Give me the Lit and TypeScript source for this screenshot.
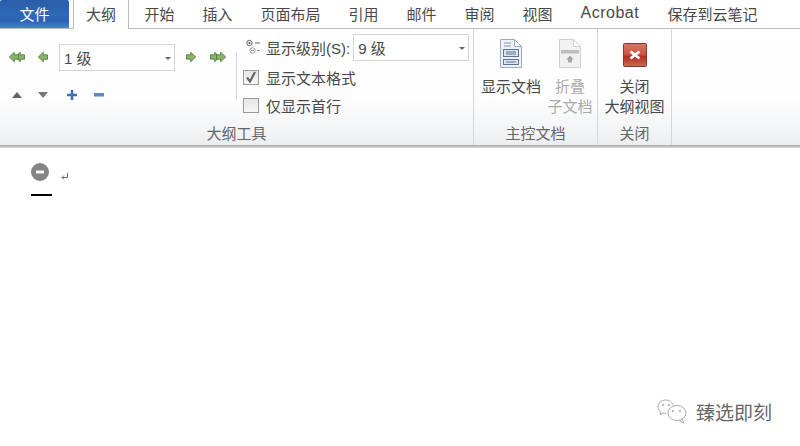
import { LitElement, html, css, svg } from "lit";
import { customElement } from "lit/decorators.js";

const arrow = (dir: 1 | -1) => svg`<g transform="${dir === 1 ? "" : "translate(10 0) scale(-1 1)"}"><path d="M.5 2.800h4.200V.2L9.700 5 4.700 9.800V7.200H.5z" fill="#8ab566" stroke="#557f44" stroke-width=".9"/></g>`;
const single = (dir: 1 | -1) => html`<svg class="arrow" width="12" height="12" viewBox="-1 -1 12 12">${arrow(dir)}</svg>`;
const double = (dir: 1 | -1) => html`<svg class="arrow" width="18" height="12" viewBox="-1 -1 18 12"><g transform="translate(${dir === 1 ? 0 : 6} 0)">${arrow(dir)}</g><g transform="translate(${dir === 1 ? 6 : 0} 0)">${arrow(dir)}</g></svg>`;

@customElement("app-root")
export class AppRoot extends LitElement {
  static styles = css`
    :host {
      display: block; width: 800px; height: 446px; background: #fff; overflow: hidden;
      font-family: "Liberation Sans", "Noto Sans CJK SC", sans-serif; color: #484848; position: relative;
    }
    .tabbar { display: flex; height: 29px; border-bottom: 1px solid #b8babc; box-sizing: border-box; background: #fff; font-size: 15px; }
    .file {
      width: 69px; height: 28px; color: #fff; display: flex; align-items: center; justify-content: center; padding-bottom: 2px; box-sizing: border-box;
      background: linear-gradient(#2a5ea8 0%, #2f69b6 55%, #2b63b1 75%, #4584cc 100%); border-radius: 2px 2px 0 0;
    }
    .active {
      margin-left: 4px; width: 56px; height: 29px; box-sizing: border-box; border: 1px solid #b8babc; border-top: 0; border-bottom: 0; padding-bottom: 2px;
      background: #fff; display: flex; align-items: center; justify-content: center;
    }
    .tabs { display: flex; }
    .tab { display: flex; align-items: center; padding: 0 0 2px 15.5px; white-space: nowrap; box-sizing: border-box; }
    .t2 { width: 58px; }
    .t3 { width: 88px; }
    .t8 { width: 87px; font-size: 16px; letter-spacing: .5px; }
    .ribbon {
      height: 116px; display: flex; box-sizing: border-box;
      background: linear-gradient(#fff 0%, #fdfdfe 60%, #f4f5f6 85%, #ecedee 100%);
    }
    .group { display: flex; flex-direction: column; border-right: 1px solid #d4d6d9; box-sizing: border-box; }
    .g1 { width: 474px; }
    .g2 { width: 124px; }
    .g3 { width: 74px; }
    .body { flex: 1; display: flex; min-height: 0; }
    .label { height: 24px; flex: none; font-size: 15px; color: #666; display: flex; align-items: center; justify-content: center; padding-bottom: 2px; box-sizing: border-box; }
    .tools { width: 236px; padding: 14px 0 0 8px; box-sizing: border-box; display: flex; flex-direction: column; gap: 15px; }
    .row1, .row2 { display: flex; align-items: center; }
    .arrow { display: block; }
    .row1 { height: 28px; }
    .combo {
      border: 1px solid #d2d4d6; background: #fff; box-sizing: border-box; height: 27px; display: flex; align-items: center;
      font-size: 15px; color: #484848; position: relative; padding-left: 4px;
    }
    .combo::after {
      content: ""; position: absolute; right: 3px; top: 12px; border: 3px solid transparent; border-top: 3px solid #666; border-bottom: 0;
    }
    .c1 { width: 116px; margin: 0 10px; }
    .c2 { width: 116px; }
    .gap1 { width: 11px; }
    .gap2 { width: 12px; }
    .divider { width: 1px; height: 48px; background: #d9dadc; margin-top: 23px; }
    .row2 { height: 18px; }
    .tri { width: 0; height: 0; border-left: 5px solid transparent; border-right: 5px solid transparent; }
    .up { border-bottom: 6px solid #666; margin: 0 16px 0 4px; }
    .down { border-top: 6px solid #777; margin-right: 19px; }
    .plus { margin-right: 17px; }
    .opts { padding: 4px 0 0 6px; display: flex; flex-direction: column; font-size: 15px; }
    .level { display: flex; align-items: center; height: 28px; gap: 3px; white-space: nowrap; margin-bottom: 2px; }
    .lvl { margin: 0 1px 0 3px; }
    .check { display: flex; align-items: center; height: 28px; gap: 7px; }
    .box { width: 16px; height: 15px; border: 1px solid #9a9a9a; background: linear-gradient(#e6e6e6, #f6f6f6); box-sizing: border-box; display: flex; align-items: center; justify-content: center; }
    .big {
      display: flex; flex-direction: column; align-items: center; font-size: 15px; line-height: 20px; padding-top: 10px; box-sizing: border-box; white-space: nowrap;
    }
    .icon { height: 29px; margin-bottom: 9px; display: block; }
    .off { color: #aaa; }
    .b1 { width: 74px; }
    .b2 { width: 44px; }
    .b3 { width: 73px; }
    .sep { height: 3px; background: linear-gradient(#a9abad, #bfc0c2 60%, #e4e5e6); }
    .doc { padding: 15px 0 0 31px; }
    .line { display: flex; align-items: flex-end; gap: 12px; }
    .caret { width: 21px; height: 2px; background: #000; margin-top: 13px; }
    .wm {
      position: absolute; left: 657px; top: 398px; display: flex; align-items: center; gap: 9px;
      font-size: 19px; color: #666;
    }
  `;

  render() {
    return html`
      <div class="tabbar">
        <div class="file">文件</div>
        <div class="active">大纲</div>
        <div class="tabs">
          <div class="tab t2">开始</div>
          <div class="tab t2">插入</div>
          <div class="tab t3">页面布局</div>
          <div class="tab t2">引用</div>
          <div class="tab t2">邮件</div>
          <div class="tab t2">审阅</div>
          <div class="tab t2">视图</div>
          <div class="tab t8">Acrobat</div>
          <div class="tab">保存到云笔记</div>
        </div>
      </div>
      <div class="ribbon">
        <div class="group g1">
          <div class="body">
            <div class="tools">
              <div class="row1">
                ${double(-1)}<span class="gap1"></span>${single(-1)}
                <div class="combo c1">1 级</div>
                ${single(1)}<span class="gap2"></span>${double(1)}
              </div>
              <div class="row2">
                <span class="tri up"></span><span class="tri down"></span>
                <svg class="plus" width="10" height="10" viewBox="0 0 10 10"><path d="M3.700 0h2.600v3.700H10v2.600H6.300V10H3.700V6.300H0V3.700h3.700z" fill="#3f6fb5"/></svg>
                <svg width="10" height="4" viewBox="0 0 10 4"><rect width="10" height="3.500" fill="#5f86c0"/></svg>
              </div>
            </div>
            <div class="divider"></div>
            <div class="opts">
              <div class="level">
                <svg class="lvl" width="16" height="16" viewBox="0 0 16 16" fill="none" stroke="#666">
                  <circle cx="3.500" cy="4" r="2.700"/><circle cx="3.500" cy="4" r="1" fill="#444" stroke="none"/><path d="M9 4h5"/>
                  <circle cx="6.500" cy="11.500" r="2.700" stroke="#999"/><path d="M5 11.500h3M11 11.500h3" stroke="#999"/>
                </svg>
                <span>显示级别(S):</span>
                <div class="combo c2">9 级</div>
              </div>
              <div class="check">
                <span class="box"><svg width="12" height="12" viewBox="0 0 12 12"><path d="M2 6.500 5 10.500 10 1" fill="none" stroke="#666" stroke-width="2.200"/></svg></span>
                <span>显示文本格式</span>
              </div>
              <div class="check">
                <span class="box"></span>
                <span>仅显示首行</span>
              </div>
            </div>
          </div>
          <div class="label">大纲工具</div>
        </div>
        <div class="group g2">
          <div class="body">
            <div class="big b1">
              <svg class="icon" width="22" height="29" viewBox="0 0 22 29">
                <path d="M.5.500h14l7 7v21H.5z" fill="#eef2f8" stroke="#9aacc3"/>
                <path d="M14.500.500v7h7z" fill="#fff" stroke="#9aacc3"/>
                <path d="M4 4h7M4 7h7" stroke="#8498b2"/>
                <rect x="3.500" y="10.500" width="15" height="7" fill="#dbe4f0" stroke="#60758f"/>
                <rect x="3.500" y="20.500" width="15" height="5" fill="#dbe4f0" stroke="#60758f"/>
                <path d="M6 13h10M6 15h10M6 23h10" stroke="#60758f"/>
              </svg>
              <span>显示文档</span>
            </div>
            <div class="big b2 off">
              <svg class="icon" width="24" height="29" viewBox="0 0 24 29">
                <path d="M1.500.500h14l7 7v21h-21z" fill="#f1f1f1" stroke="#cfcfcf"/>
                <path d="M15.500.500v7h7z" fill="#fff" stroke="#cfcfcf"/>
                <rect x="3" y="11" width="18" height="3.500" fill="#bdbdbd"/>
                <path d="M12 16.500l4 4h-2v3h-4v-3H8z" fill="#a8a8a8"/>
              </svg>
              <span>折叠</span><span>子文档</span>
            </div>
          </div>
          <div class="label">主控文档</div>
        </div>
        <div class="group g3">
          <div class="body">
            <div class="big b3">
              <svg class="icon" width="24" height="29" viewBox="0 0 24 29">
                <defs><linearGradient id="r" x1="0" y1="0" x2="0" y2="1"><stop offset="0" stop-color="#d9786a"/><stop offset=".5" stop-color="#c9503f"/><stop offset=".55" stop-color="#b22d20"/><stop offset="1" stop-color="#c96a50"/></linearGradient></defs>
                <rect x=".5" y="4.500" width="23" height="23" rx="1" fill="url(#r)" stroke="#7d3a30"/>
                <path d="M7.500 12.500l9 7M16.500 12.500l-9 7" stroke="#fff" stroke-width="2.800"/>
              </svg>
              <span>关闭</span><span>大纲视图</span>
            </div>
          </div>
          <div class="label">关闭</div>
        </div>
      </div>
      <div class="sep"></div>
      <div class="doc">
        <div class="line">
          <svg width="18" height="18" viewBox="0 0 18 18"><circle cx="9" cy="9" r="9" fill="#858585"/><rect x="5" y="7.500" width="8" height="3" fill="#f4f4f4"/></svg>
          <svg width="8" height="8" viewBox="0 0 8 8"><path d="M6.500 0v4.500H1.200M3 2.500 1 4.500l2 2" fill="none" stroke="#666"/></svg>
        </div>
        <div class="caret"></div>
      </div>
      <div class="wm">
        <svg width="30" height="25" viewBox="0 0 30 25" fill="none" stroke="#aaa">
          <path d="M9 1C4 1 1 4 1 8c0 2 1 4 3 5l-1 3 3-2c1 .4 2 .5 3 .5"/>
          <path d="M17 7c-2-4-5-6-8-6"/>
          <ellipse cx="20" cy="14" rx="9" ry="7.500"/>
          <path d="M25 20l2 4-5-2.500"/>
          <circle cx="6" cy="6" r=".8"/><circle cx="12" cy="6" r=".8"/><circle cx="16" cy="12" r=".8"/><circle cx="23" cy="12" r=".8"/>
        </svg>
        <span>臻选即刻</span>
      </div>
    `;
  }
}
